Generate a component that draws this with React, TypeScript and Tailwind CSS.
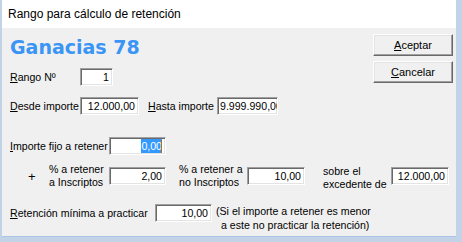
import React from 'react';

const Field: React.FC<{ width: string; children?: React.ReactNode; left?: boolean }> = ({ width, children, left }) => (
  <div
    className={`${width} h-[18px] shrink-0 bg-white border border-t-[#a0a0a0] border-l-[#a0a0a0] border-b-white border-r-white shadow-[inset_1px_1px_0_#696969,inset_-1px_-1px_0_#e3e3e3] flex items-center overflow-hidden whitespace-nowrap leading-[14px] ${
      left ? 'justify-start pl-[2px]' : 'justify-end pr-[3px]'
    }`}
  >
    {children}
  </div>
);

const Btn: React.FC<{ hot: string; rest: string }> = ({ hot, rest }) => (
  <button className="w-[80px] h-[22px] bg-[#f0f0f0] border border-t-white border-l-white border-b-[#696969] border-r-[#696969] shadow-[inset_-1px_-1px_0_#a0a0a0,inset_1px_1px_0_#e3e3e3] flex items-center justify-center text-[11px]">
    <span>
      <u className="underline-offset-1">{hot}</u>
      {rest}
    </span>
  </button>
);

export default function App() {
  return (
    <div className="w-[462px] h-[242px] flex bg-[#c2d3e8] text-black font-['Liberation_Sans',Arial,sans-serif] whitespace-nowrap overflow-hidden">
      <div className="ml-[2px] mr-[6px] mb-[5px] flex-1 flex flex-col border-b border-[#a9c4e6]">
        {/* title bar */}
        <div className="h-[28px] shrink-0 bg-white flex items-center pl-[6px] text-[12px]">
          Rango para cálculo de retención
        </div>

        <div className="flex-1 min-h-0 bg-[#f0f0f0] flex flex-col text-[10.6px] leading-[13px]">
          {/* top section */}
          <div className="flex">
            <div className="flex flex-col pl-[8px]">
              <div className="mt-[8px] h-[22px] leading-[22px] text-[19px] font-bold text-[#3a95f5] font-['DejaVu_Sans',Verdana,sans-serif]">
                Ganacias 78
              </div>

              <div className="mt-[10px] flex items-center">
                <span className="w-[70px] shrink-0">
                  <u className="underline-offset-1">R</u>ango Nº
                </span>
                <Field width="w-[33px]">1</Field>
              </div>

              <div className="mt-[11px] flex items-center">
                <span className="w-[70px] shrink-0">
                  <u className="underline-offset-1">D</u>esde importe
                </span>
                <Field width="w-[59px]">12.000,00</Field>
                <span className="ml-[9px] w-[69px] shrink-0">
                  <u className="underline-offset-1">H</u>asta importe
                </span>
                <Field width="w-[61px]" left>
                  9.999.990,00
                </Field>
              </div>
            </div>

            <div className="ml-auto mr-[3px] mt-[6px] flex flex-col gap-[5px]">
              <Btn hot="A" rest="ceptar" />
              <Btn hot="C" rest="ancelar" />
            </div>
          </div>

          {/* importe fijo */}
          <div className="mt-[22px] pl-[8px] h-[18px] flex items-center">
            <span className="w-[99px] shrink-0">
              <u className="underline-offset-1">I</u>mporte fijo a retener
            </span>
            <Field width="w-[57px]">
              <span className="bg-[#3399ff] text-white">0,00</span>
              <span className="w-[1px] h-[13px] bg-[#cc6600] -ml-[1px]" />
            </Field>
          </div>

          {/* porcentajes */}
          <div className="mt-[12px] pl-[8px] h-[18px] flex items-center">
            <span className="ml-[18px] w-[21px] shrink-0 text-[13px]">+</span>
            <div className="w-[60px] shrink-0 flex flex-col">
              <span>% a retener</span>
              <span>a Inscriptos</span>
            </div>
            <Field width="w-[57px]">2,00</Field>
            <div className="ml-[13px] w-[68px] shrink-0 flex flex-col">
              <span>% a retener a</span>
              <span>no Inscriptos</span>
            </div>
            <Field width="w-[58px]">10,00</Field>
            <div className="ml-[18px] w-[68px] shrink-0 pt-[3px] flex flex-col">
              <span>sobre el</span>
              <span>excedente de</span>
            </div>
            <Field width="w-[58px]">12.000,00</Field>
          </div>

          {/* retencion minima */}
          <div className="mt-[19px] pl-[8px] flex items-start">
            <span className="w-[145px] shrink-0 h-[18px] flex items-center">
              <span>
                <u className="underline-offset-1">R</u>etención mínima a practicar
              </span>
            </span>
            <Field width="w-[57px]">10,00</Field>
            <div className="ml-[4px] flex flex-col leading-[14px]">
              <span>(Si el importe a retener es menor</span>
              <span className="pl-[5px]">a este no practicar la retención)</span>
            </div>
          </div>
        </div>
      </div>
    </div>
  );
}
